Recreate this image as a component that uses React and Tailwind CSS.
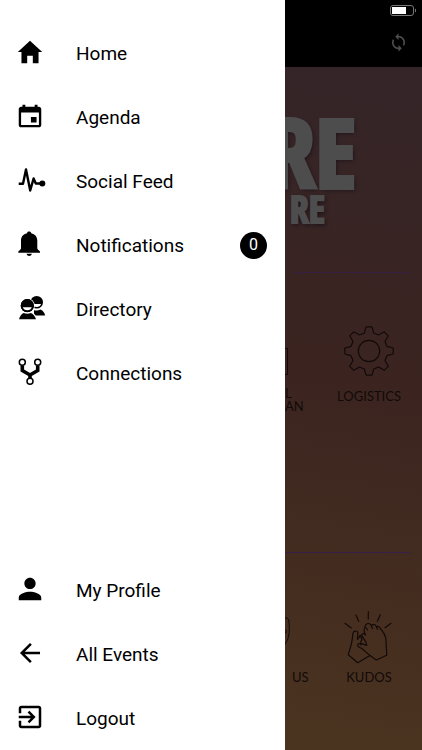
import {
  IoMdHome,
  IoMdCalendar,
  IoMdPerson,
  IoMdArrowBack,
  IoMdExit,
  IoMdSync,
} from "react-icons/io";

function PulseIcon({ className }) {
  return (
    <svg viewBox="1 0 30 30" className={`overflow-visible ${className}`} aria-hidden="true">
      <path d="M4.700 18.700h4.300L12 4.500 16.200 25.500 19.600 13.500 21.800 18.500h5" fill="none" stroke="currentColor" strokeWidth="2.400" strokeLinejoin="round" />
      <circle cx="28.300" cy="18.500" r="3" fill="currentColor" />
    </svg>
  );
}

function BellIcon({ className }) {
  return (
    <svg viewBox="1 0 30 30" className={className} fill="currentColor" aria-hidden="true">
      <path d="M13 4.300c0-2.400 4.200-2.400 4.200 0 3.800.8 6.100 3.600 6.100 7.200v7.800c0 1.200 1.200 2 2.700 3.200v1.300H4.300v-1.300C5.800 21.300 7 20.500 7 19.300v-7.800c0-3.600 2.200-6.400 6-7.200z" />
      <path d="M12.600 24.800h5.200c-.3 2.800-4.900 2.800-5.200 0z" />
    </svg>
  );
}

function DirectoryIcon({ className }) {
  return (
    <svg viewBox="1 0 30 30" className={`overflow-visible ${className}`} fill="currentColor" aria-hidden="true">
      <circle cx="22.700" cy="9.300" r="6.300" />
      <path d="M18.500 11h8.600c-.6 1.900-2.200 2.900-4.400 2.900s-3.600-1-4.200-2.900z" fill="#fff" />
      <path d="M20 17.200c2.300.6 4.500.4 6.300-.6 2.500.8 4.100 3 4.900 5.900H20z" />
      <circle cx="13.300" cy="12.700" r="7.500" fill="#fff" />
      <circle cx="13.300" cy="12.700" r="6.600" />
      <path d="M8.800 14.300h9c-.6 2-2.300 3-4.500 3s-3.900-1-4.500-3z" fill="#fff" />
      <path d="M4 27.200c.5-4 2.500-7.200 5.400-8.300l8 0c2.900 1.100 5.300 4.300 5.800 8.300z" fill="#fff" />
      <circle cx="13.300" cy="12.700" r="6.600" />
      <path d="M8.800 14.300h9c-.6 2-2.300 3-4.500 3s-3.900-1-4.500-3z" fill="#fff" />
      <path d="M5 26.300c.8-3 2.200-5.200 4.600-6.300 2.400 1 5 1 7.300 0 2.500 1.100 4.200 3.300 5.100 6.300z" />
    </svg>
  );
}

function ConnectionsIcon({ className }) {
  return (
    <svg viewBox="1 0 30 30" className={className} fill="none" stroke="currentColor" aria-hidden="true">
      <path d="M8.300 8.500v5L16 18l7.700-4.500v-5M16 17v4.500" strokeWidth="3.600" />
      <g fill="#fff" strokeWidth="1.500">
        <circle cx="8.300" cy="5.300" r="3" />
        <circle cx="23.700" cy="5.300" r="3" />
        <circle cx="16" cy="24.300" r="3" />
      </g>
    </svg>
  );
}

function GearIcon() {
  return (
    <svg viewBox="0 0 50 50" className="size-[50px]" fill="none" stroke="currentColor" strokeWidth="1.200" strokeLinejoin="round" aria-hidden="true">
      <circle cx="25" cy="25" r="10.700" />
      <path d="M22 .8h6l1.700 6.200 4.800 2 5.800-3.200 4 4-3.300 5.700 2 4.800 6.200 1.700v6L43 29.700l-2 4.800 3.300 5.800-4 4-5.800-3.300-4.800 2-1.700 6.200h-6L20.300 43l-4.800-2-5.800 3.300-4-4L9 34.500l-2-4.800L.8 28v-6L7 20.300l2-4.800-3.300-5.700 4-4L15.500 9l4.800-2z" />
    </svg>
  );
}

function ClapIcon() {
  return (
    <svg viewBox="0 0 50 54" className="h-[54px] w-[50px]" fill="none" stroke="currentColor" strokeWidth="1.200" strokeLinecap="round" strokeLinejoin="round" aria-hidden="true">
      <path d="M24.300.6V8M12 4l2.700 6.300M36.300 3.700l-3 6.600M1 12.300L7.300 17M47 12.300l-6 4.400" />
      <path d="M32.300 49L26 44.500c-4-3-6.500-6-9-7.500-2.500-.6-4-2.500-3-4 2.500-1.500 6 .5 8.700 1.500 0-3-1.200-4.500-3-7-1.500-2-2.500-3.500-1.700-4.500 1-1.200 2.500 0 3.500 1-1.500-3-2-5.500-.5-7.500 0-3 2-4.700 4.500-3.700 1.200.5 1.700 1.200 2 2.200.5-2 3.500-2.500 5 .8 2-1 3.700.5 4.500 2.700 3 3 4.500 7 5 10 0 6 .7 11 .7 15.700z" />
      <path d="M21 16.500c1 0 2 1 2.500 2.500M27.500 15l1 2.500M32.500 15.800l1 2.500" />
      <path d="M17 34c-.5-2.500-1-3.500 1-5.500l-1.800-4.200c-.7 1.700-1.700 3-2.700 4-.3-2.800.8-5 .3-7-1-2-4.300-1.600-4.800.8-.3 3.500-.8 7-1.500 10.500L4.300 43.700l9.400 8L26 44.500" />
    </svg>
  );
}

const mainItems = [
  { label: "Home", Icon: IoMdHome },
  { label: "Agenda", Icon: IoMdCalendar },
  { label: "Social Feed", Icon: PulseIcon },
  { label: "Notifications", Icon: BellIcon, count: 0 },
  { label: "Directory", Icon: DirectoryIcon },
  { label: "Connections", Icon: ConnectionsIcon },
];

const accountItems = [
  { label: "My Profile", Icon: IoMdPerson },
  { label: "All Events", Icon: IoMdArrowBack },
  { label: "Logout", Icon: IoMdExit },
];

function MenuList({ items }) {
  return (
    <ul>
      {items.map(({ label, Icon, count }) => (
        <li key={label}>
          <a href="#" className="flex h-16 items-center pr-[18px] pl-[15px]">
            <Icon className="mb-0.5 size-[30px] shrink-0" />
            <span className="mt-0.5 ml-[31px] flex-1 text-[19px] leading-6">{label}</span>
            {count !== undefined && (
              <span className="flex size-[27px] items-center justify-center rounded-full bg-black text-base text-white">
                {count}
              </span>
            )}
          </a>
        </li>
      ))}
    </ul>
  );
}

function EventPage() {
  return (
    <main className="flex min-w-0 flex-1 flex-col overflow-hidden bg-linear-[190deg] from-[#33252a] via-[#3b2420] to-[#4b341f] text-[#120a09]">
      <header className="flex h-[67px] shrink-0 flex-col items-end justify-between bg-black pt-1 pr-[5px] pb-[14px]">
        <svg viewBox="0 0 28 13" className="h-[13px] w-7" aria-hidden="true">
          <rect x="1.500" y="1.500" width="23" height="10" rx="2.500" fill="none" stroke="#777" />
          <rect x="3" y="3" width="14" height="7" fill="#fff" />
          <path d="M26 4.500c1.500.5 1.500 3.500 0 4z" fill="#777" />
        </svg>
        <button type="button" aria-label="Refresh" className="mr-2 text-[#4d4d4d]">
          <IoMdSync className="size-[21px]" />
        </button>
      </header>

      <h1 className="flex h-[205px] flex-col items-end pt-[46px] font-['Noto_Sans_ExtraCondensed','Open_Sans_Condensed','Roboto_Condensed',sans-serif] font-black text-[#4d4d4d] [text-shadow:2px_2px_4px_#17101a]">
        <span className="mr-[66px] text-[96px] leading-[76px] [-webkit-text-stroke:4px_#4d4d4d]">RE</span>
        <span className="mr-[97px] text-[38px] leading-[38px] [-webkit-text-stroke:2px_#4d4d4d]">RE</span>
      </h1>

      <section className="h-[280px]">
        <hr className="mr-3 ml-2 border-[#352044]" />
        <div className="flex justify-between pt-[53px] pr-[21px]">
          <div className="flex flex-col font-['Lato',sans-serif] text-[13px] leading-[13px]">
            <span className="mt-[22px] mb-[12px] h-[27px] w-[3px] border-y border-r border-current" />
            <span>L</span>
            <span>AN</span>
          </div>
          <a href="#" className="flex flex-col items-center gap-2 font-['Lato',sans-serif] text-[13px] leading-6">
            <GearIcon />
            LOGISTICS
          </a>
        </div>
      </section>

      <section className="flex-1">
        <hr className="mr-3 border-[#38204a]" />
        <div className="flex items-end justify-between pt-[58px] pr-7 font-['Lato',sans-serif] text-[13px] leading-6">
          <div className="flex flex-col gap-[18px]">
            <svg viewBox="0 0 6 30" className="h-[30px] w-[6px]" fill="none" stroke="currentColor" aria-hidden="true">
              <path d="M0 1h2c1 0 2 2 2 5 1 9 0 16-4 21M0 13c2 0 2 3 0 3" />
            </svg>
            <span className="pl-[7px]">US</span>
          </div>
          <a href="#" className="flex flex-col items-center">
            <ClapIcon />
            KUDOS
          </a>
        </div>
      </section>
    </main>
  );
}

export default function App() {
  return (
    <div className="flex min-h-screen bg-black font-['Roboto',sans-serif] text-black">
      <nav aria-label="Main menu" className="flex w-[285px] shrink-0 flex-col justify-between bg-white pt-[21px]">
        <MenuList items={mainItems} />
        <MenuList items={accountItems} />
      </nav>
      <EventPage />
    </div>
  );
}
